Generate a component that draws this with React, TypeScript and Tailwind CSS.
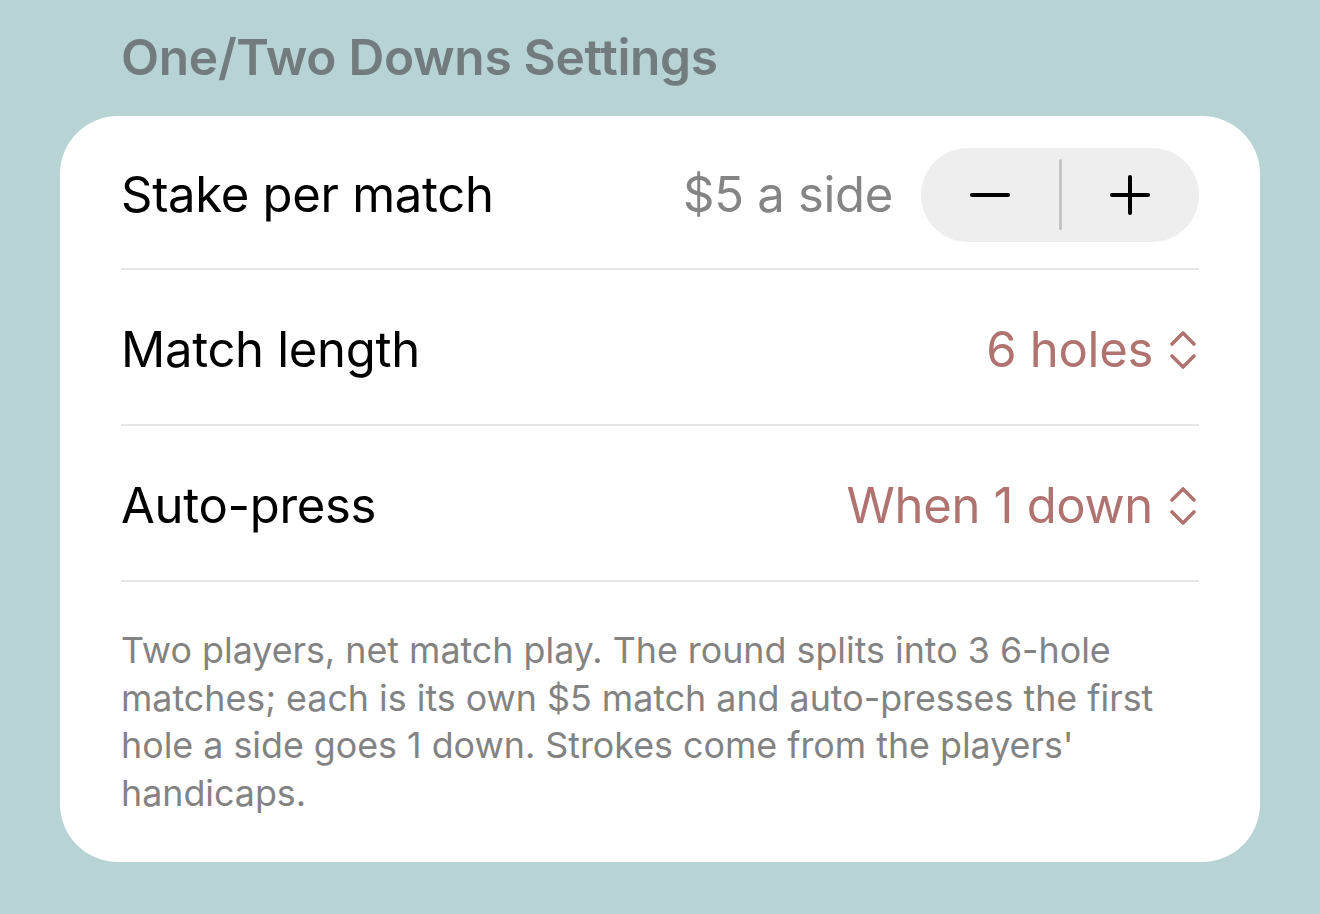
import React from "react";

function Chevrons() {
  return (
    <svg width="32" height="42" viewBox="0 0 32 42" fill="none" stroke="#b07370" strokeWidth="3.6" strokeLinecap="round" strokeLinejoin="round">
      <path d="M5 15 L16 4 L27 15" />
      <path d="M5 27 L16 38 L27 27" />
    </svg>
  );
}

export default function App() {
  return (
    <div className="w-[1320px] h-[914px] bg-[#b8d3d4] overflow-hidden" style={{ fontFamily: "Inter, 'Noto Sans', sans-serif" }}>
      <div className="pl-[121px] pt-[27px] h-[116px]">
        <h1 className="text-[49.6px] leading-[60px] font-semibold text-[#727c7f] tracking-[-0.3px]">One/Two Downs Settings</h1>
      </div>
      <div className="mx-[60px] bg-white rounded-[58px] px-[61px] pb-[44px]">
        <div className="h-[154px] pt-[5px] flex items-center border-b-2 border-[#e6e6e6]">
          <span className="text-[49px] text-black flex-1 tracking-[-0.3px]">Stake per match</span>
          <span className="text-[49px] text-[#858585] mr-[28px] tracking-[-0.3px]">$5 a side</span>
          <div className="w-[278px] h-[94px] rounded-full bg-[#eeeeee] flex items-center">
            <div className="flex-1 flex items-center justify-center">
              <div className="w-[40px] h-[4px] rounded-full bg-black" />
            </div>
            <div className="w-[3px] h-[71px] bg-[#c4c4c4] rounded-full" />
            <div className="flex-1 flex items-center justify-center">
              <svg width="40" height="40" viewBox="0 0 40 40" stroke="black" strokeWidth="4" strokeLinecap="round">
                <path d="M20 2 V38 M2 20 H38" />
              </svg>
            </div>
          </div>
        </div>
        <div className="h-[156px] pt-[6px] flex items-center border-b-2 border-[#e6e6e6]">
          <span className="text-[49px] text-black flex-1 tracking-[-0.3px]">Match length</span>
          <span className="text-[49px] text-[#b07370] mr-[14px] tracking-[-0.3px]">6 holes</span>
          <Chevrons />
        </div>
        <div className="h-[156px] pt-[6px] flex items-center border-b-2 border-[#e6e6e6]">
          <span className="text-[49px] text-black flex-1 tracking-[-0.3px]">Auto-press</span>
          <span className="text-[49px] text-[#b07370] mr-[14px] tracking-[-0.3px]">When 1 down</span>
          <Chevrons />
        </div>
        <p className="pt-[45px] text-[35.8px] leading-[47.7px] text-[#838383]">
          Two players, net match play. The round splits into 3 6-hole matches; each is its own $5 match and auto-presses the first hole a side goes 1 down. Strokes come from the players' handicaps.
        </p>
      </div>
    </div>
  );
}
